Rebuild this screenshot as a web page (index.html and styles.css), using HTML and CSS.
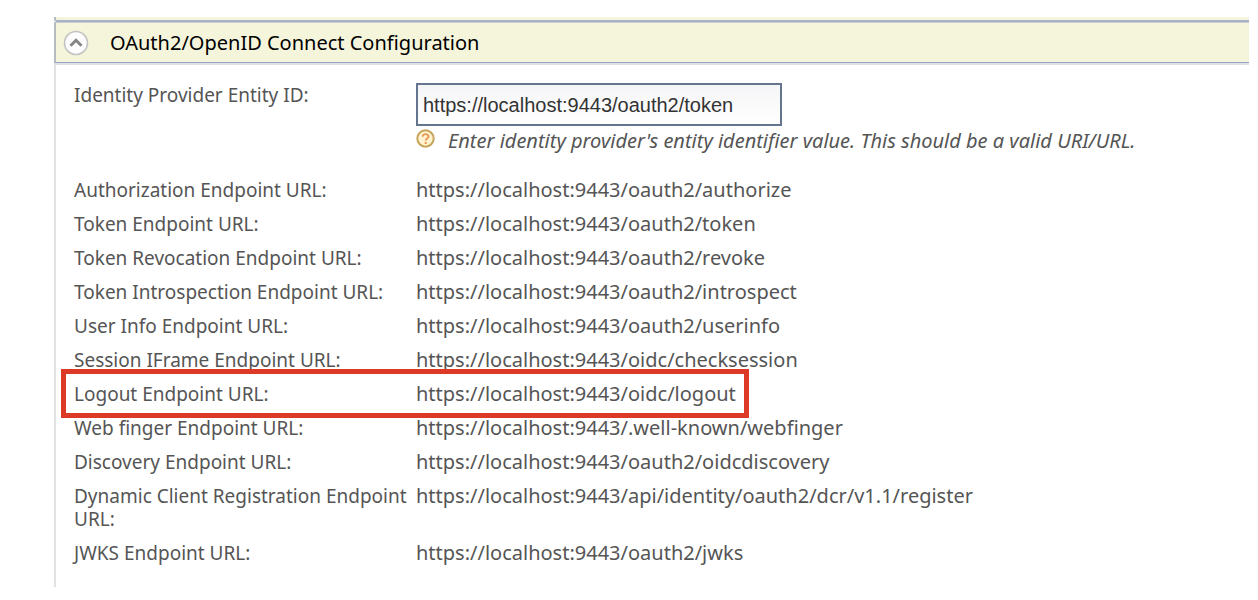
FILE: index.html
```html
<!DOCTYPE html>
<html lang="en">
<head>
<meta charset="utf-8">
<title>Resident Identity Provider</title>
<link rel="stylesheet" href="styles.css">
</head>
<body>
<main class="page">
  <div class="previous-section"></div>
  <h2 class="section-header">
    <button class="toggle" type="button" aria-expanded="true" aria-controls="oauth-config" aria-label="Collapse section">
      <svg class="toggle-icon" viewBox="0 0 26 26" aria-hidden="true">
        <circle cx="13" cy="13" r="11.5" fill="#fdfdfd" stroke="#c3c3c3" stroke-width="1.6"/>
        <path d="M7.5 15.8 13 10.2l5.5 5.6" fill="none" stroke="#858585" stroke-width="2.9"/>
      </svg>
    </button>
    <span>OAuth2/OpenID Connect Configuration</span>
  </h2>
  <section class="section-body" id="oauth-config">
    <table class="settings">
      <tr class="entity-row">
        <th scope="row"><label for="entity-id">Identity Provider Entity ID:</label></th>
        <td>
          <input class="entity-input" id="entity-id" type="text" value="https://localhost:9443/oauth2/token" aria-describedby="entity-help">
          <div class="help">
            <svg class="help-icon" viewBox="0 0 20 20" aria-hidden="true">
              <circle cx="9.5" cy="9.5" r="8.2" fill="#fff3d0" stroke="#c6a45c" stroke-width="2"/>
              <path d="M6.7 7.7C6.7 4.3 12.5 4.3 12.5 7.5c0 2-2.7 2-2.7 4" fill="none" stroke="#e99a55" stroke-width="1.9"/>
              <circle cx="9.7" cy="13.9" r="1.2" fill="#e99a55"/>
            </svg>
            <em id="entity-help">Enter identity provider's entity identifier value. This should be a valid URI/URL.</em>
          </div>
        </td>
      </tr>
      <tr><th scope="row">Authorization Endpoint URL:</th><td>https://localhost:9443/oauth2/authorize</td></tr>
      <tr><th scope="row">Token Endpoint URL:</th><td>https://localhost:9443/oauth2/token</td></tr>
      <tr><th scope="row">Token Revocation Endpoint URL:</th><td>https://localhost:9443/oauth2/revoke</td></tr>
      <tr><th scope="row">Token Introspection Endpoint URL:</th><td>https://localhost:9443/oauth2/introspect</td></tr>
      <tr><th scope="row">User Info Endpoint URL:</th><td>https://localhost:9443/oauth2/userinfo</td></tr>
      <tr><th scope="row">Session IFrame Endpoint URL:</th><td>https://localhost:9443/oidc/checksession</td></tr>
      <tr class="marked-row"><th scope="row">Logout Endpoint URL:<span class="marker"></span></th><td>https://localhost:9443/oidc/logout</td></tr>
      <tr><th scope="row">Web finger Endpoint URL:</th><td>https://localhost:9443/.well-known/webfinger</td></tr>
      <tr><th scope="row">Discovery Endpoint URL:</th><td>https://localhost:9443/oauth2/oidcdiscovery</td></tr>
      <tr><th scope="row">Dynamic Client Registration Endpoint URL:</th><td>https://localhost:9443/api/identity/oauth2/dcr/v1.1/register</td></tr>
      <tr><th scope="row">JWKS Endpoint URL:</th><td>https://localhost:9443/oauth2/jwks</td></tr>
    </table>
  </section>
</main>
</body>
</html>
```
FILE: styles.css
```css
* {
  box-sizing: border-box;
}

body {
  margin: 0;
  background: #fff;
  color: #555;
  font: 20px/23px "Lucida Grande", "Lucida Sans", "Noto Sans", sans-serif;
}

.page {
  padding: 17px 9px 12px 54px;
}

.previous-section {
  height: 5px;
  background: #f5f5dc;
  border-left: 2px solid #b3bbc9;
  border-bottom: 2px solid #a7b2ca;
  border-bottom-left-radius: 3px;
}

.section-header {
  display: flex;
  align-items: center;
  gap: 21px;
  height: 41px;
  margin: 0;
  padding-left: 7px;
  background: #f5f5dc;
  border-top: 1px solid #c9ccc9;
  border-left: 2px solid #b7bbc0;
  border-bottom: 1px solid #94a5cb;
  box-shadow: 0 2px 0 #e0e1e4;
  color: #000;
  font-size: 20px;
  font-weight: 400;
}

.toggle {
  width: 26px;
  height: 26px;
  padding: 0;
  border: 0;
  background: none;
}

.toggle-icon {
  display: block;
  width: 26px;
  height: 26px;
}

.section-body {
  margin-top: 2px;
  padding: 18px 0 18px 18px;
  border-left: 2px solid #e2e2e2;
}

.settings {
  width: 100%;
  border-collapse: collapse;
  table-layout: fixed;
}

.settings th,
.settings td {
  padding: 6px 0 5px;
  font-weight: 400;
  text-align: left;
  vertical-align: top;
}

.settings th {
  width: 342px;
  padding: 7px 0 4px;
  font-size: 19px;
}

.settings .entity-row td {
  padding: 0 0 20px;
}

.settings .entity-row th {
  padding: 1px 0 0;
}

.entity-input {
  display: block;
  width: 366px;
  height: 43px;
  padding: 2px 5px 0;
  border: 2px solid #66758f;
  background: linear-gradient(#f5f5f7, #fff);
  color: #333;
  font: 20px "Liberation Sans", Arial, sans-serif;
}

.help {
  display: flex;
  align-items: flex-start;
  gap: 12px;
  padding-top: 3px;
}

.help-icon {
  flex: none;
  width: 20px;
  height: 20px;
}

.marked-row {
  position: relative;
}

.marker {
  position: absolute;
  top: -7px;
  left: -13px;
  width: 688px;
  height: 49px;
  border: 5px solid #dc3a27;
  pointer-events: none;
}
```
